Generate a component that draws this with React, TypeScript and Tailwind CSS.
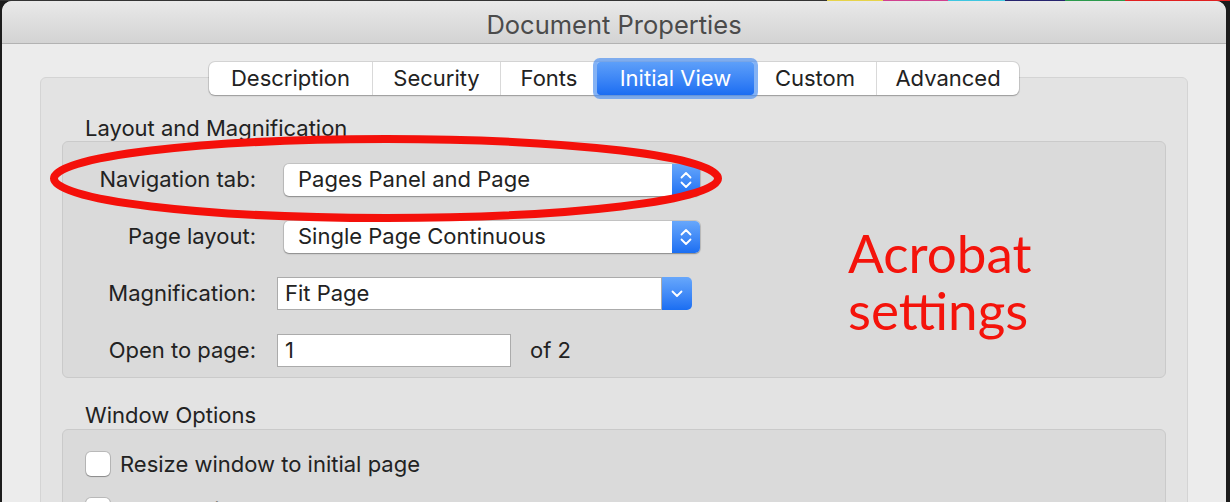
import React from "react";

const font = { fontFamily: "Inter, 'Liberation Sans', sans-serif" };

const tabs = [
  { label: "Description", w: "w-[163px]" },
  { label: "Security", w: "w-[128px]" },
  { label: "Fonts", w: "w-[97px]" },
  { label: "Initial View", w: "w-[157px]", active: true },
  { label: "Custom", w: "w-[122px]" },
  { label: "Advanced", w: "w-[143px]" },
];

function Stepper() {
  return (
    <div className="w-[28px] h-full rounded-r-[5px] bg-gradient-to-b from-[#67a7fb] to-[#1a6ef2] flex items-center justify-center">
      <svg width="14" height="22" viewBox="0 0 14 22" fill="none" stroke="white" strokeWidth="1.8" strokeLinecap="round" strokeLinejoin="round">
        <path d="M2.5 8.5 L7 4 L11.5 8.5" />
        <path d="M2.5 13.5 L7 18 L11.5 13.5" />
      </svg>
    </div>
  );
}

function PopupButton({ value }: { value: string }) {
  return (
    <div className="ml-[28px] w-[416px] h-[32px] bg-white rounded-[5px] flex shadow-[0_0_0_1px_rgba(0,0,0,0.1),0_1px_1.5px_rgba(0,0,0,0.3)]">
      <div className="flex-1 pl-[14px] flex items-center text-[22px] text-[#222]">{value}</div>
      <Stepper />
    </div>
  );
}

function Row({ label, children }: { label: string; children: React.ReactNode }) {
  return (
    <div className="flex items-center h-[33px]">
      <div className="w-[193px] text-right text-[22px] text-[#222] whitespace-nowrap">{label}</div>
      {children}
    </div>
  );
}

function Checkbox({ label }: { label: string }) {
  return (
    <div className="flex items-center h-[24px]">
      <div className="w-[24px] h-[24px] bg-white rounded-[5px] shadow-[0_0_0_1px_rgba(0,0,0,0.15),0_1px_1px_rgba(0,0,0,0.25)]" />
      <span className="ml-[10px] text-[22px] leading-[24px] text-[#222]">{label}</span>
    </div>
  );
}

export default function App() {
  return (
    <div className="w-[1230px] h-[502px] overflow-hidden bg-[#1c1c1c] relative" style={font}>
      <div className="flex h-[1px]">
        <div className="w-[827px] bg-[#333]" />
        <div className="w-[56px] bg-[#e6d34a]" />
        <div className="w-[65px] bg-[#d0408f]" />
        <div className="w-[57px] bg-[#3fc6e0]" />
        <div className="w-[60px] bg-[#26246e]" />
        <div className="w-[60px] bg-[#2c9a4c]" />
        <div className="w-[105px] bg-[#e02020]" />
      </div>
      <div className="ml-[2px] w-[1224px] h-[520px] rounded-t-[10px] overflow-hidden bg-[#ececec]">
        <div className="h-[43px] flex items-center justify-center bg-gradient-to-b from-[#e9e9e9] to-[#d3d3d3] border-b border-[#b2b2b2]">
          <span className="text-[25.5px] text-[#4b4b4b] mt-[6px]">Document Properties</span>
        </div>

        <div className="pt-[18px]">
          <div className="flex justify-center relative z-10">
            <div className="flex h-[33px] bg-white rounded-[6px] shadow-[0_0_0_1px_rgba(0,0,0,0.1),0_1px_1.5px_rgba(0,0,0,0.25)]">
              {tabs.map((t, i) => (
                <div
                  key={t.label}
                  className={
                    t.active
                      ? `${t.w} flex items-center justify-center text-[22px] text-white bg-gradient-to-b from-[#5d9ff9] to-[#1b6df2] shadow-[0_0_0_4px_rgba(80,145,240,0.7)] rounded-[3px]`
                      : `${t.w} flex items-center justify-center text-[22px] text-[#222] ${i > 0 && !tabs[i - 1].active ? "border-l border-[#d9d9d9]" : ""}`
                  }
                >
                  {t.label}
                </div>
              ))}
            </div>
          </div>

          <div className="mx-[38px] -mt-[18px] bg-[#e3e3e3] border border-[#d4d4d4] rounded-[6px] pt-[38px] h-[460px]">
            <div className="pl-[44px] text-[22px] leading-[24px] text-[#222]">Layout and Magnification</div>
            <div className="mx-[21px] mt-[1px] bg-[#dadada] border border-[#cacaca] rounded-[6px] pt-[21px] pb-[10px] flex flex-col gap-[24px]">
              <Row label="Navigation tab:">
                <PopupButton value="Pages Panel and Page" />
              </Row>
              <Row label="Page layout:">
                <PopupButton value="Single Page Continuous" />
              </Row>
              <Row label="Magnification:">
                <div className="ml-[21px] w-[415px] h-[33px] flex">
                  <div className="flex-1 bg-white border border-[#ababab] pl-[7px] flex items-center text-[22px] text-[#222]">Fit Page</div>
                  <div className="w-[30px] h-full rounded-r-[5px] bg-gradient-to-b from-[#67a7fb] to-[#1a6ef2] flex items-center justify-center">
                    <svg width="14" height="9" viewBox="0 0 14 9" fill="none" stroke="white" strokeWidth="1.8" strokeLinecap="round" strokeLinejoin="round">
                      <path d="M2.5 2.5 L7 7 L11.5 2.5" />
                    </svg>
                  </div>
                </div>
              </Row>
              <Row label="Open to page:">
                <div className="ml-[21px] w-[234px] h-[33px] bg-white border border-[#ababab] pl-[7px] flex items-center text-[22px] text-[#222]">1</div>
                <span className="ml-[19px] text-[22px] text-[#222]">of 2</span>
              </Row>
            </div>

            <div className="pl-[44px] mt-[25px] text-[22px] leading-[24px] text-[#222]">Window Options</div>
            <div className="mx-[21px] mt-[2px] bg-[#dadada] border border-[#cacaca] rounded-[6px] pt-[22px] pl-[23px] flex flex-col gap-[22px] h-[200px]">
              <Checkbox label="Resize window to initial page" />
              <Checkbox label="Center window on screen" />
            </div>
          </div>
        </div>
      </div>

      {/* annotations */}
      <svg className="absolute left-0 top-0 pointer-events-none" width="1230" height="502">
        <ellipse cx="386" cy="178.5" rx="332" ry="39.5" fill="none" stroke="#f4100a" strokeWidth="8" />
      </svg>
      <div
        className="absolute left-[848px] top-[224px] text-[#f4130b] text-[53px] leading-[57px]"
        style={{ fontFamily: "Lato, 'Open Sans', sans-serif" }}
      >
        <div>Acrobat</div>
        <div>settings</div>
      </div>
    </div>
  );
}
